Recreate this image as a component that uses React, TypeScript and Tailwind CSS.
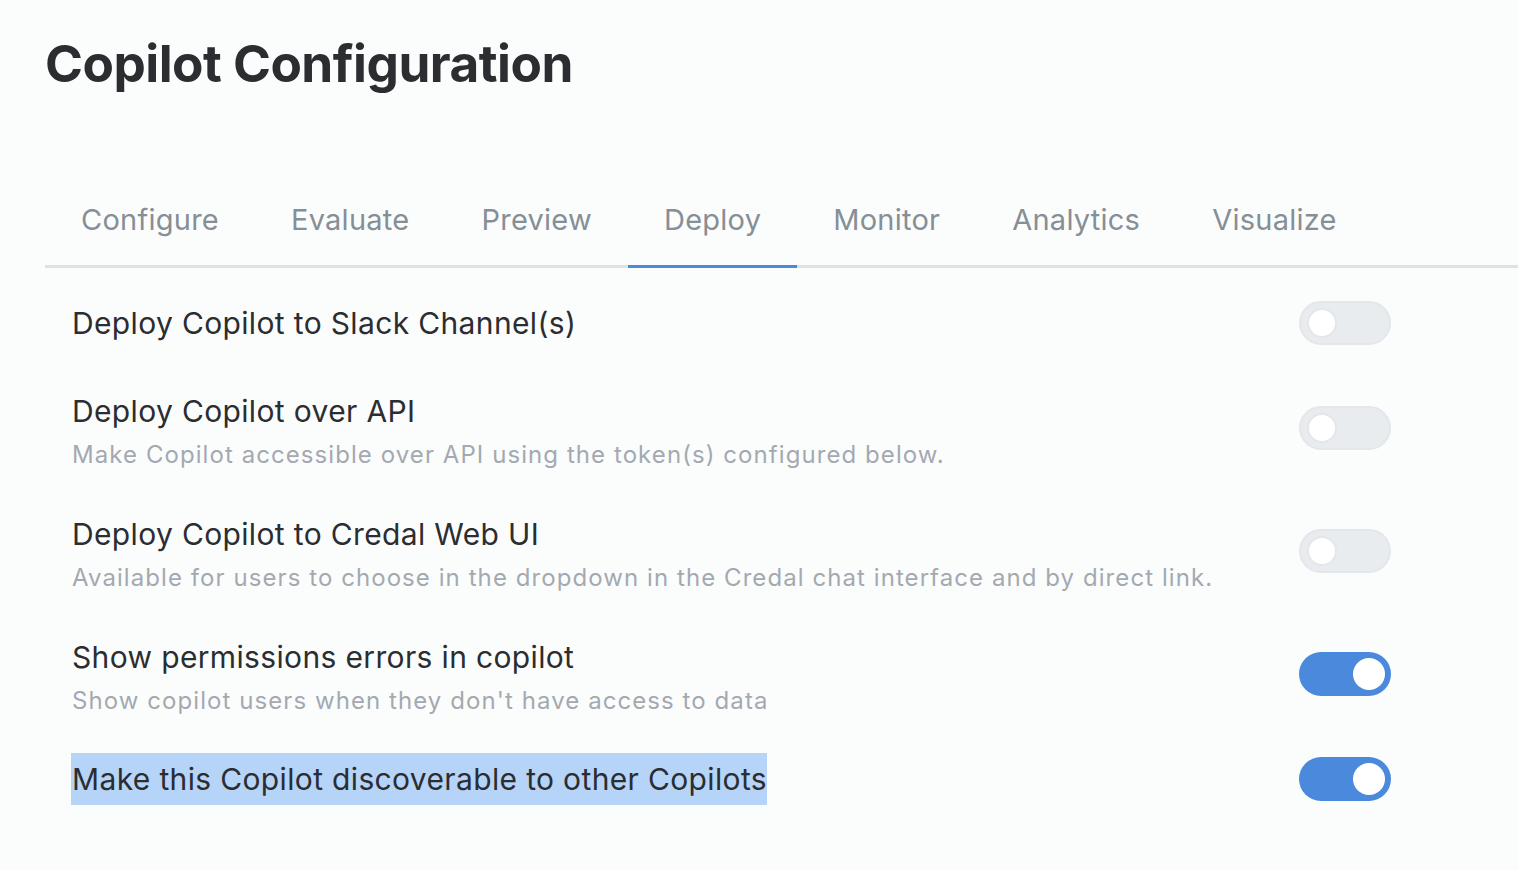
import React from "react";

const tabs = ["Configure", "Evaluate", "Preview", "Deploy", "Monitor", "Analytics", "Visualize"];

function Toggle({ on, className }: { on: boolean; className?: string }) {
  return on ? (
    <div className={"flex h-[44px] w-[92px] shrink-0 items-center justify-end rounded-full bg-[#4a89dc] pr-[6px] " + (className ?? "")}>
      <div className="h-[32px] w-[32px] rounded-full bg-white" />
    </div>
  ) : (
    <div
      className={
        "flex h-[44px] w-[92px] shrink-0 items-center rounded-full border-2 border-[#e3e6ea] bg-[#e9ecef] pl-[6px] " + (className ?? "")
      }
    >
      <div className="h-[30px] w-[30px] rounded-full border-2 border-[#e3e6ea] bg-white" />
    </div>
  );
}

function Row({
  label,
  sub,
  on,
  highlight,
  className,
}: {
  label: string;
  sub?: string;
  on: boolean;
  highlight?: boolean;
  className?: string;
}) {
  return (
    <div className={"flex justify-between pl-[27px] pr-[127px] " + (sub ? "items-start " : "items-center ") + (className ?? "")}>
      <div className="flex flex-col">
        <div className="text-[30px] leading-[40px] tracking-[0.35px] text-[#2b2d31]">
          {highlight ? <span className="-ml-[1px] bg-[#b6d4f8] py-[8px] pl-[1px]">{label}</span> : label}
        </div>
        {sub && <div className="mt-[9px] text-[24px] leading-[30px] tracking-[1.07px] text-[#a4a9b1]">{sub}</div>}
      </div>
      <Toggle on={on} className={sub ? "mt-[15px]" : ""} />
    </div>
  );
}

export default function App() {
  return (
    <div className="min-h-[870px] w-full bg-[#fbfdfd] pl-[45px] font-['Inter','Noto_Sans',sans-serif]">
      <h1 className="pt-[30px] text-[51.3px] font-bold leading-[66px] tracking-[-0.5px] text-[#2b2d31]">Copilot Configuration</h1>
      <div className="mt-[98px] flex border-b-[3px] border-[#dee2e6]">
        {tabs.map((t) => (
          <div
            key={t}
            className={
              "-mb-[3px] px-[36px] pb-[20px] pt-[1px] text-[29px] leading-[50px] tracking-[0.25px] text-[#868e96] " +
              (t === "Deploy" ? "border-b-[3px] border-[#4a89dc]" : "border-b-[3px] border-transparent")
            }
          >
            {t}
          </div>
        ))}
      </div>
      <div className="flex flex-col">
        <Row className="mt-[33px]" label="Deploy Copilot to Slack Channel(s)" on={false} />
        <Row
          className="mt-[46px]"
          label="Deploy Copilot over API"
          sub="Make Copilot accessible over API using the token(s) configured below."
          on={false}
        />
        <Row
          className="mt-[44px]"
          label="Deploy Copilot to Credal Web UI"
          sub="Available for users to choose in the dropdown in the Credal chat interface and by direct link."
          on={false}
        />
        <Row
          className="mt-[44px]"
          label="Show permissions errors in copilot"
          sub="Show copilot users when they don't have access to data"
          on={true}
        />
        <Row className="mt-[41px]" label="Make this Copilot discoverable to other Copilots" on={true} highlight />
      </div>
    </div>
  );
}
